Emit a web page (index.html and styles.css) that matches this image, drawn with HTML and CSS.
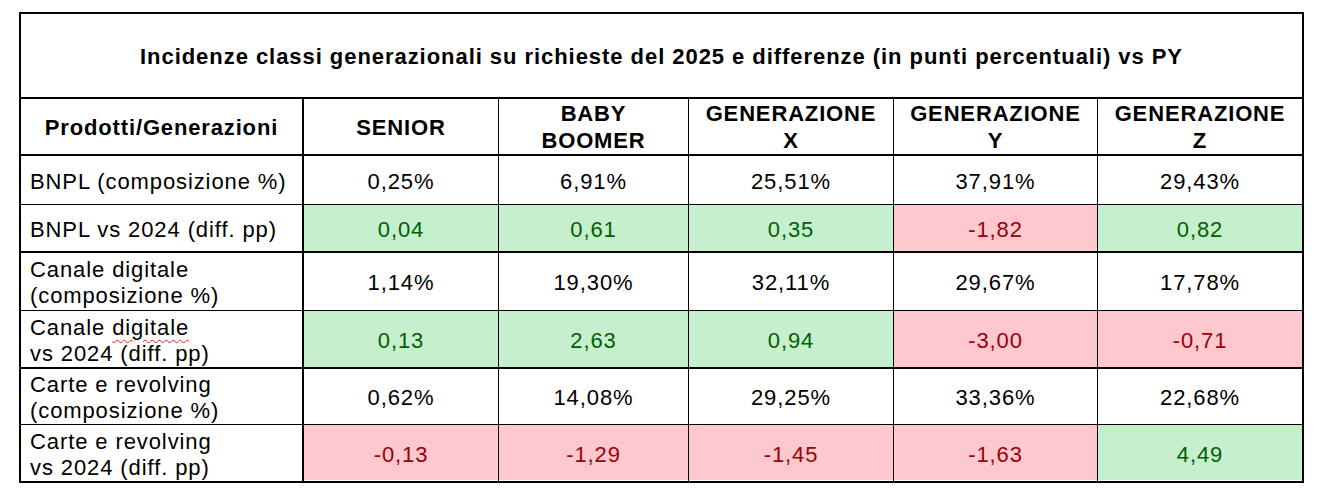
FILE: index.html
```html
<!DOCTYPE html>
<html lang="it">
<head>
<meta charset="utf-8">
<title>Incidenze classi generazionali</title>
<link rel="stylesheet" href="styles.css">
</head>
<body>
<table class="tbl">
  <colgroup>
    <col class="c-label">
    <col class="c-senior">
    <col class="c-baby">
    <col class="c-genx">
    <col class="c-geny">
    <col class="c-genz">
  </colgroup>
  <tr class="r-title">
    <th colspan="6" class="title last">Incidenze classi generazionali su richieste del 2025 e differenze (in punti percentuali) vs PY</th>
  </tr>
  <tr class="r-head">
    <th class="head label">Prodotti/Generazioni</th>
    <th class="head">SENIOR</th>
    <th class="head">BABY<br>BOOMER</th>
    <th class="head">GENERAZIONE<br>X</th>
    <th class="head">GENERAZIONE<br>Y</th>
    <th class="head last">GENERAZIONE<br>Z</th>
  </tr>
  <tr class="r-1">
    <td class="label">BNPL (composizione %)</td>
    <td>0,25%</td>
    <td>6,91%</td>
    <td>25,51%</td>
    <td>37,91%</td>
    <td class="last">29,43%</td>
  </tr>
  <tr class="r-2 group-end">
    <td class="label">BNPL vs 2024 (diff. pp)</td>
    <td class="pos">0,04</td>
    <td class="pos">0,61</td>
    <td class="pos">0,35</td>
    <td class="neg">-1,82</td>
    <td class="pos last">0,82</td>
  </tr>
  <tr class="r-3">
    <td class="label">Canale digitale<br>(composizione %)</td>
    <td>1,14%</td>
    <td>19,30%</td>
    <td>32,11%</td>
    <td>29,67%</td>
    <td class="last">17,78%</td>
  </tr>
  <tr class="r-4 group-end">
    <td class="label">Canale <span class="spell">digitale </span><br>vs 2024 (diff. pp)</td>
    <td class="pos">0,13</td>
    <td class="pos">2,63</td>
    <td class="pos">0,94</td>
    <td class="neg">-3,00</td>
    <td class="neg last">-0,71</td>
  </tr>
  <tr class="r-5">
    <td class="label">Carte e revolving<br>(composizione %)</td>
    <td>0,62%</td>
    <td>14,08%</td>
    <td>29,25%</td>
    <td>33,36%</td>
    <td class="last">22,68%</td>
  </tr>
  <tr class="r-6 group-end final">
    <td class="label">Carte e revolving<br>vs 2024 (diff. pp)</td>
    <td class="neg">-0,13</td>
    <td class="neg">-1,29</td>
    <td class="neg">-1,45</td>
    <td class="neg">-1,63</td>
    <td class="pos last">4,49</td>
  </tr>
</table>
</body>
</html>
```

FILE: styles.css
```css
html, body {
  margin: 0;
  padding: 0;
  background: #ffffff;
}

body {
  font-family: "Liberation Sans", Arial, sans-serif;
  color: #000000;
}

.tbl {
  margin: 12px 0 0 19px;
  border-collapse: separate;
  border-spacing: 0;
  table-layout: fixed;
  width: 1285px;
  border-left: 2px solid #000;
  border-top: 2px solid #000;
  font-size: 22px;
  line-height: 26px;
  letter-spacing: 0.9px;
}

.c-label { width: 283px; }
.c-senior { width: 195px; }
.c-baby { width: 190px; }
.c-genx { width: 205px; }
.c-geny { width: 204px; }
.c-genz { width: 206px; }

.tbl th,
.tbl td {
  box-sizing: border-box;
  padding: 3px 0 0 0;
  border-right: 1px solid #000;
  border-bottom: 1px solid #000;
  text-align: center;
  vertical-align: middle;
  font-weight: normal;
  white-space: nowrap;
}

.tbl .last {
  border-right-width: 2px;
}

.tbl .label {
  border-right-width: 2px;
}

.tbl td.label {
  text-align: left;
  padding-left: 9px;
}

.r-title { height: 85px; }
.r-head { height: 57px; }
.r-1 { height: 49px; }
.r-2 { height: 48px; }
.r-3 { height: 58px; }
.r-4 { height: 58px; }
.r-5 { height: 56px; }
.r-6 { height: 58px; }

.tbl .title {
  font-weight: bold;
  border-bottom-width: 2px;
  letter-spacing: 0.95px;
  padding-top: 2px;
}

.tbl .head {
  font-weight: bold;
  border-bottom-width: 2px;
  line-height: 27px;
  letter-spacing: 0.85px;
  padding-top: 1px;
}

.group-end > td {
  border-bottom-width: 2px;
}

.tbl .pos {
  background: #c6efce;
  color: #006100;
}

.tbl .neg {
  background: #ffc7ce;
  color: #9c0006;
}

.final > .pos,
.final > .neg {
  box-shadow: inset 0 -1px 0 #ffffff;
}

.spell {
  text-decoration: underline wavy #e02020;
  text-decoration-thickness: 1px;
  text-underline-offset: 4px;
}
```
